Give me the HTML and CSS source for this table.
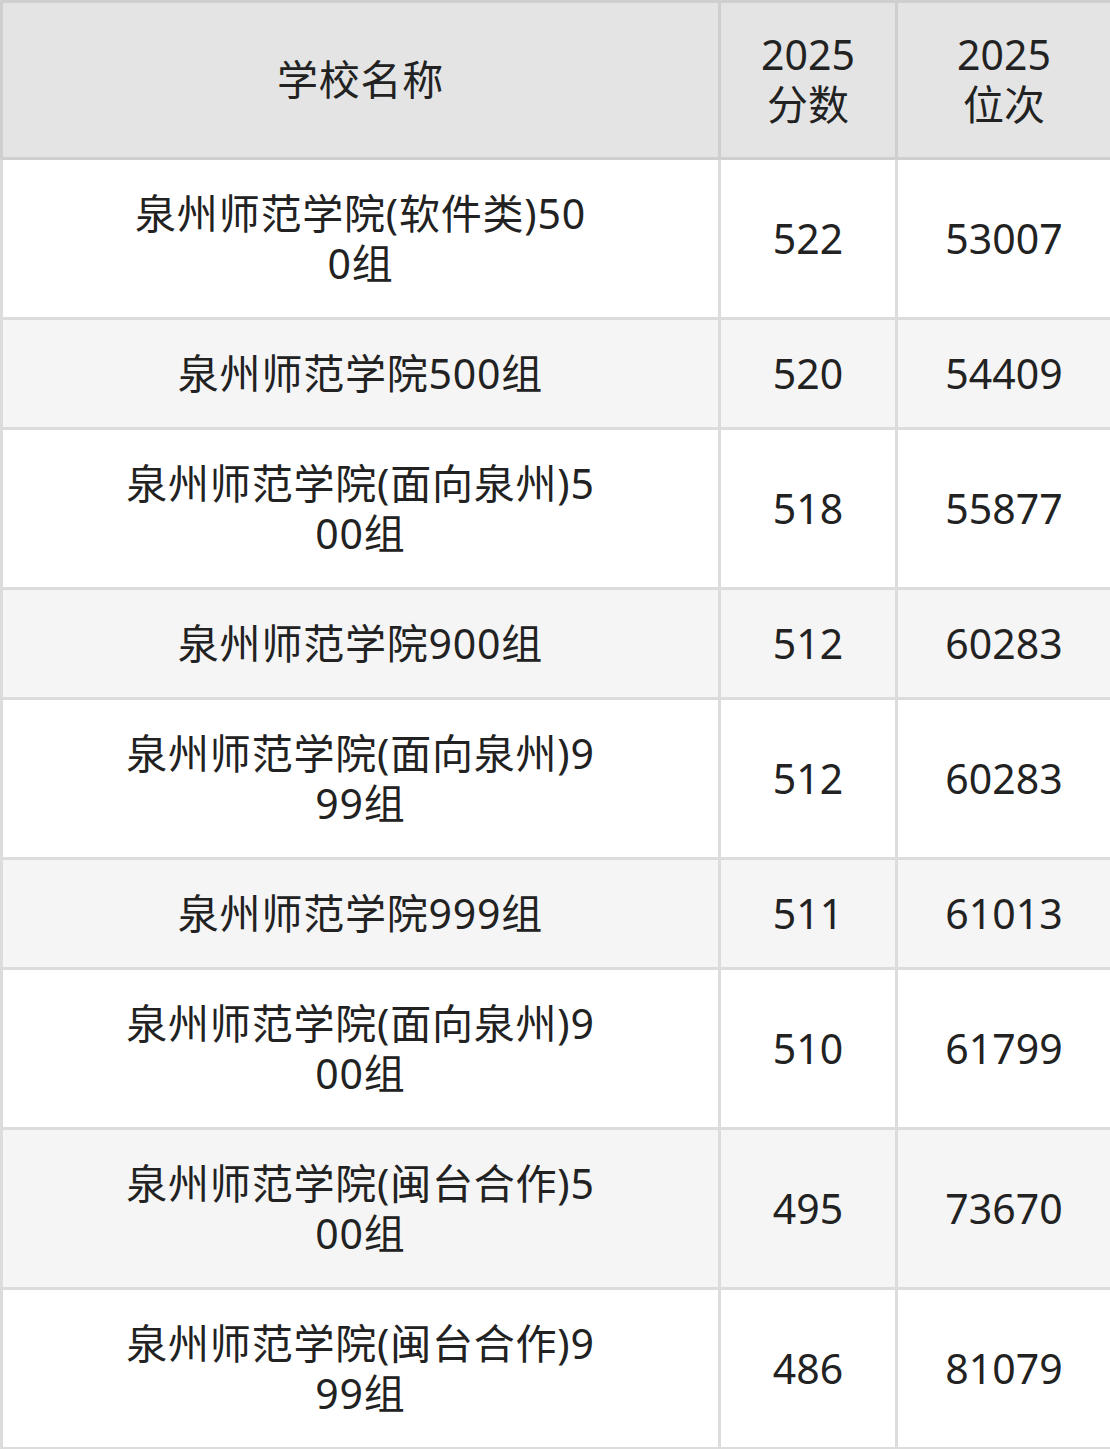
FILE: index.html
```html
<!DOCTYPE html>
<html lang="zh-CN">
<head>
<meta charset="utf-8">
<title>泉州师范学院 分数位次</title>
<link rel="stylesheet" href="styles.css">
</head>
<body>
<table class="score-table">
  <colgroup>
    <col class="col-name">
    <col class="col-score">
    <col class="col-rank">
  </colgroup>
  <thead>
    <tr>
      <th><div class="name">学校名称</div></th>
      <th>2025<br>分数</th>
      <th>2025<br>位次</th>
    </tr>
  </thead>
  <tbody>
    <tr><td><div class="name">泉州师范学院(软件类)500组</div></td><td>522</td><td>53007</td></tr>
    <tr><td><div class="name">泉州师范学院500组</div></td><td>520</td><td>54409</td></tr>
    <tr><td><div class="name">泉州师范学院(面向泉州)500组</div></td><td>518</td><td>55877</td></tr>
    <tr><td><div class="name">泉州师范学院900组</div></td><td>512</td><td>60283</td></tr>
    <tr><td><div class="name">泉州师范学院(面向泉州)999组</div></td><td>512</td><td>60283</td></tr>
    <tr><td><div class="name">泉州师范学院999组</div></td><td>511</td><td>61013</td></tr>
    <tr><td><div class="name">泉州师范学院(面向泉州)900组</div></td><td>510</td><td>61799</td></tr>
    <tr><td><div class="name">泉州师范学院(闽台合作)500组</div></td><td>495</td><td>73670</td></tr>
    <tr><td><div class="name">泉州师范学院(闽台合作)999组</div></td><td>486</td><td>81079</td></tr>
  </tbody>
</table>
</body>
</html>
```
FILE: styles.css
```css
html, body {
  margin: 0;
  padding: 0;
  background: #ffffff;
}

.score-table {
  width: 1110px;
  border-collapse: collapse;
  table-layout: fixed;
  font-family: "Noto Sans", "Noto Sans CJK SC", sans-serif;
  font-size: 41px;
  line-height: 50px;
  color: #222222;
  border: 3px solid #d6d6d6;
}

.col-name { width: 718px; }
.col-score { width: 177px; }
.col-rank { width: 215px; }

.score-table th,
.score-table td {
  border: 3px solid #dcdcdc;
  text-align: center;
  vertical-align: middle;
  padding: 28px 4px 29px;
  font-weight: normal;
}

.score-table th {
  background: #e4e4e4;
  border-color: #cfcfcf;
  padding: 26px 4px 28px;
}

.score-table tbody tr:nth-child(even) td {
  background: #f5f5f5;
}

.name {
  width: 470px;
  margin: 0 auto;
  letter-spacing: 0.8px;
  word-break: break-all;
}
```
